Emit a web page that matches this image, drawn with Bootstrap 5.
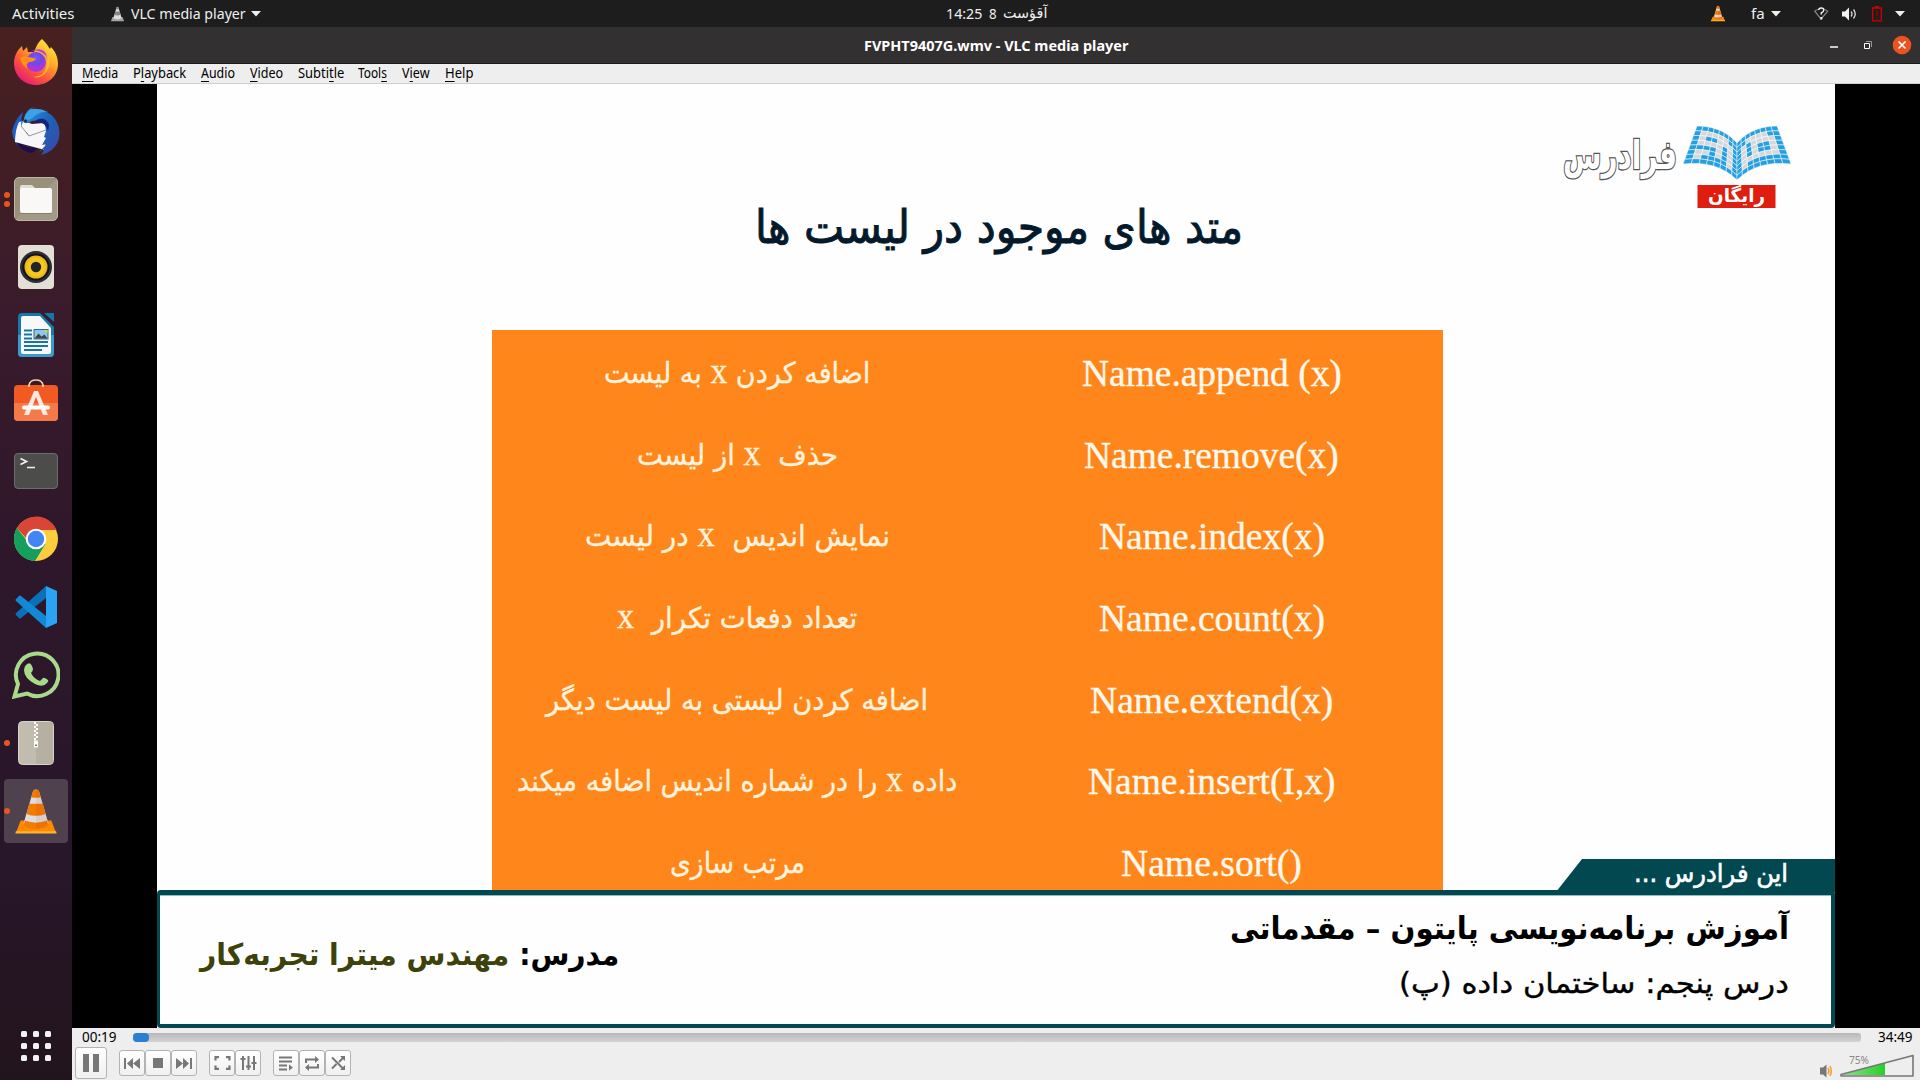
<!DOCTYPE html>
<html lang="fa">
<head>
<meta charset="utf-8">
<title>FVPHT9407G.wmv - VLC media player</title>
<link href="https://cdn.jsdelivr.net/npm/bootstrap@5.3.0/dist/css/bootstrap.min.css" rel="stylesheet">
<script src="https://cdn.jsdelivr.net/npm/bootstrap@5.3.0/dist/js/bootstrap.bundle.min.js"></script>
<style>
body{width:1920px;height:1080px;overflow:hidden;background:#000;font-family:"Noto Sans","DejaVu Sans",sans-serif;color:#000}
svg{display:block;flex:none}
.fit{display:inline-block;flex:none;white-space:nowrap}
.fit>span{display:inline-block;transform-origin:0 50%}
.topbar{height:27px;background:#1d1d1d;color:#f0f0f0;font-size:15px;line-height:25px}
.dock{width:72px;padding-top:2px;background:linear-gradient(#48201f,#391b2c 28%,#2e172b 50%,#28162a 80%,#22141c)}
.slot{height:68px;padding:0 4px;position:relative}
.slot.active::before{content:"";position:absolute;left:4px;top:2px;width:64px;height:64px;border-radius:4px;background:#50414f}
.slot svg{position:relative}
.dots{position:absolute;left:4px;top:0;width:6px;height:68px;gap:3px}
.dots i{width:6px;height:6px;border-radius:50%;background:#e95420}
.appgrid{display:grid;grid-template-columns:repeat(3,6px);gap:6px;margin:auto auto 19px}
.appgrid i{width:6px;height:6px;border-radius:1.5px;background:#f2f2f2}
.titlebar{height:37px;background:#333031;border-bottom:1px solid #1c1a1b;color:#fff;font-weight:700;font-size:15px;line-height:36px}
.menus{height:20px;background:#eee;border-bottom:1px solid #cfcfcf;padding-left:10px;gap:14.7px;font-size:13.5px;line-height:19px}
.menus u{text-underline-offset:3px;text-decoration-thickness:1px}
.stage{height:944px;background:#000;padding:0 85px}
.slide{height:944px;background:#fefefe;overflow:hidden}
.fa{font-family:"DejaVu Sans",sans-serif}
.heading{padding:107px 0 0 598px;height:246px;color:#041a2c;font-size:46px;line-height:72px;-webkit-text-stroke:1px #041a2c}
.methods{margin-left:335px;width:951px;height:561px;background:#ff861b;color:#fff3de;padding-top:3px}
.methods .line{height:81.7px}
.c-fa{width:490px;font-size:29px;line-height:80px;-webkit-text-stroke:.35px #fff3de}
.c-en{width:461px;font-family:"Liberation Serif",serif;font-size:37px;line-height:82px;color:#fff8ec;padding-right:2px;-webkit-text-stroke:.35px #fff8ec}
.lx{font-family:"Liberation Serif",serif;font-size:36px;line-height:1px}
.logo{position:absolute;right:0;top:26px}
.lesson{position:absolute;left:0;bottom:0;width:1678px;height:138px;border:solid #024850;border-width:5px 4px 4px 3px;border-radius:4px;background:#fefefe;box-shadow:inset 0 1px 0 #8dbcc2}
.lessontab{position:absolute;right:0;top:775px;width:279px;height:33px;background:#024850;clip-path:polygon(26px 0,100% 0,100% 100%,0 100%);color:#fff;font-size:25px;line-height:30px;padding-right:47px;-webkit-text-stroke:.6px #fff}
.teacher{font-size:30px;font-weight:700;padding-left:40px;padding-bottom:10px;line-height:40px}
.l1{font-size:31px;font-weight:700;line-height:56px}
.l2{font-size:28px;line-height:56px;-webkit-text-stroke:.4px #000}
.controls{height:52px;background:#eee}
.seekrow{height:18px;font-size:13.5px;line-height:18px;padding-left:10px}
.track{height:9px;width:1728px;border-radius:3px;background:linear-gradient(#b7b7b7,#d3d3d3)}
.knob{width:16px;height:9px;border-radius:4px;background:#2a7fd3}
.tool{padding:0;width:26px;height:26px;border:1px solid #b3b3b3;border-radius:3px;background:linear-gradient(#fff,#f0f0f0)}
.tool.big{width:32px;height:32px}
</style>
</head>
<body>
<svg width="0" height="0" style="display:none"><defs>
<symbol id="cone" viewBox="0 0 48 48"><path d="M8 33.500h32l5 13H3z" fill="#ff8a00"/><path d="M3 44.500h42l.5 2.500h-43z" fill="#ffb52e"/><path d="M21 2.500q3-3 6 0l10 34q-13 9-26 0z" fill="#dedede"/><path d="M21 2.500q3-3 6 0L29 9q-5 1.500-10 0zM17 16h14l3 10.500q-10 4-20 0zM12.500 33.500q11.500 4.500 23 0l1.500 5q-13 8-26 0z" fill="#f47a00"/><path d="M24 0q2 0 3 2.500l10 34q-5 4.500-13 5z" fill="#a33" opacity=".1"/></symbol>
<symbol id="conegray" viewBox="0 0 48 48"><path d="M8 33.500h32l5 14H3z" fill="#a5a5a5"/><path d="M21 2.500q3-3 6 0l10 34q-13 9-26 0z" fill="#ddd"/><path d="M21 2.500q3-3 6 0L29 9h-10zM17 16h14l3 10.500q-10 4-20 0z" fill="#858585"/></symbol>
</defs></svg>

<header class="topbar d-flex align-items-center">
  <span class="fit" style="margin-left:12px" data-w="63">Activities</span>
  <svg width="15" height="16" style="margin-left:35px"><use href="#conegray"/></svg>
  <span class="fit" style="margin-left:6px" data-w="115">VLC media player</span>
  <svg width="10" height="6" style="margin-left:5px"><path d="M0 0h10L5 5.500z" fill="#eee"/></svg>
  <span class="fit" style="margin-left:685px" data-w="36">14:25</span>
  <span class="fit" style="margin-left:7px" data-w="8">8</span>
  <span class="fit fa" style="margin-left:6px" data-w="44" dir="rtl">آقؤست</span>
  <svg width="16" height="17" style="margin-left:663px"><use href="#cone"/></svg>
  <span class="fit" style="margin-left:25px" data-w="14">fa</span>
  <svg width="10" height="6" style="margin-left:6px"><path d="M0 0h10L5 5.500z" fill="#eee"/></svg>
  <svg width="15" height="14" style="margin-left:33px" fill="none"><path d="M4 2.500Q2 3 .8 4.200L7 12l6.700-7.800Q12.500 3 10.500 2.500" stroke="#888" stroke-width="1.200"/><path d="M4.800 3q0-2 2.500-2t2.500 2q0 1.500-2.500 3v1.500" stroke="#f2f2f2" stroke-width="1.500"/><rect x="6.300" y="10" width="2" height="2.500" fill="#f2f2f2"/></svg>
  <svg width="15" height="14" style="margin-left:13px"><path d="M0 4.500h3L7 .5v13l-4-4H0z" fill="#f2f2f2"/><path d="M9 4.500q2 2.500 0 5M11.500 2.500q3.500 4.500 0 9" fill="none" stroke="#ddd" stroke-width="1.300"/></svg>
  <svg width="10" height="16" style="margin-left:15px"><path d="M3 0h4v2H3z" fill="#c00"/><path d="M.7 2h8.600v12.800H.7z" fill="none" stroke="#c00" stroke-width="1.300"/><path d="M5 4.500V10M5 11v1.800" stroke="#900" stroke-width="1.400"/></svg>
  <svg width="10" height="6" style="margin-left:13px"><path d="M0 0h10L5 5.500z" fill="#eee"/></svg>
</header>

<div class="d-flex">
<nav class="dock d-flex flex-column" style="height:1053px">
  <div class="slot d-flex align-items-center justify-content-center"><svg width="48" height="48" viewBox="0 0 48 48"><defs><linearGradient id="ff" x1=".9" y1="0" x2=".2" y2="1"><stop offset="0" stop-color="#fff24a"/><stop offset=".35" stop-color="#ffb22a"/><stop offset=".65" stop-color="#ff5a36"/><stop offset="1" stop-color="#e3127e"/></linearGradient><radialGradient id="fp" cx=".5" cy=".3"><stop offset="0" stop-color="#7a55ff"/><stop offset=".55" stop-color="#6b4be0"/><stop offset="1" stop-color="#a935e0"/></radialGradient></defs><path d="M30 0c5 5 6 7 8 10l1-2c5 5 7 11 7 17C46 37 36 46 24 46S2 37 2 24c0-6 3-13 8-17l1 5 4-4 1 5 6 0c2-4 3-9 8-13z" fill="url(#ff)"/><circle cx="24" cy="23" r="10" fill="url(#fp)"/><path d="M8 19q4-3 8-1 7 1 8 2-2 3-7 3-4 2-1 7-6-3-8-11z" fill="#ff9216"/><path d="M17 13q8-4 15 2 4 3 3 10 3-8-3-13-6-4-15 1z" fill="#c03bd8"/><path d="M33 12q8 10 2 20-5 8-14 6 14-1 14-15 0-6-2-11z" fill="#ffce36" opacity=".75"/></svg></div>
  <div class="slot d-flex align-items-center justify-content-center"><svg width="48" height="48" viewBox="0 0 48 48"><defs><linearGradient id="tb" x1="0" y1="0" x2="1" y2="1"><stop offset="0" stop-color="#2f9be8"/><stop offset=".5" stop-color="#1b63b8"/><stop offset="1" stop-color="#4144a8"/></linearGradient></defs><path d="M11 5Q3 12 0 24q1 14 12 19L6 36l-3-8 6-14z" fill="#1c5fc0"/><path d="M5 33q7 9 21 8l-6 5Q8 44 4 35z" fill="#1c0c50"/><path d="M7 15l5-1 8 3 12-1 3 6-2 21L3 35q0-12 4-20z" fill="#f7f7f9"/><path d="M9 19l8 10 17-6M17 29l-3-4" fill="none" stroke="#999" stroke-width="1"/><path d="M9 20l3-8q2-10 10-12l-3 2q16-1 24 10 6 9 4 19-3 13-18 17 3-4 3-6l-5 3 8-8-5 1 4-7-2-1 2-6-1-7q-6-4-13-3-7 5-11-1z" fill="url(#tb)"/><path d="M22 15q12-1 14 9 3-9-4-12-6-1-10 3z" fill="#18207e"/><path d="M20 2q-8 4-8 12 6 0 12-6 6-4 12-3-8-4-16-3z" fill="#3ba1e8"/><circle cx="13.500" cy="14" r="1.700" fill="#27323d"/></svg></div>
  <div class="slot d-flex align-items-center justify-content-center"><div class="dots d-flex flex-column justify-content-center"><i></i><i></i></div><svg width="48" height="48" viewBox="0 0 48 48"><rect x="2.500" y="2.500" width="43" height="43" rx="4.500" fill="#a29a87" stroke="#bdb7a8"/><path d="M45 3L3 45V8q0-5 5-5z" fill="#989079"/><path d="M8 20v-8q0-2 2-2h10l3 3v7z" fill="#e0ddd3"/><rect x="8" y="13" width="32" height="25" rx="2" fill="#f9f8f7"/><path d="M9 38.500h30" stroke="#857d6b"/></svg></div>
  <div class="slot d-flex align-items-center justify-content-center"><svg width="48" height="48" viewBox="0 0 48 48"><rect x="6" y="2" width="36" height="44" rx="4" fill="#e3dfd4"/><circle cx="24" cy="24" r="16" fill="#2c2d37"/><circle cx="24" cy="24" r="13.500" fill="#11131c"/><circle cx="24" cy="24" r="11.500" fill="#edb910"/><circle cx="24" cy="24" r="9.500" fill="#f4c723"/><circle cx="24" cy="24" r="5.200" fill="#24252b"/></svg></div>
  <div class="slot d-flex align-items-center justify-content-center"><svg width="48" height="48" viewBox="0 0 48 48"><path d="M10 2h18l14 14v26q0 4-4 4H10q-4 0-4-4V6q0-4 4-4z" fill="#1878ae"/><path d="M6 24h36v18q0 4-4 4H10q-4 0-4-4z" fill="#3a9bcd"/><path d="M11 5h17l11 12v24q0 2-2 2H11q-2 0-2-2V7q0-2 2-2z" fill="#f8f8f8"/><path d="M32 2h10v9z" fill="#1676aa"/><path d="M12 19.500h8M12 23.500h8M12 27.500h8M12 31h24M12 35h24M12 39h18" stroke="#1674aa" stroke-width="1.800"/><rect x="22" y="18.500" width="14" height="9.500" fill="#8cc7ea" stroke="#2a6e98"/><path d="M22.500 27.500l4-5 3 3 3-2 3 4z" fill="#444"/><path d="M32 19h3.500v3z" fill="#f4cd37"/></svg></div>
  <div class="slot d-flex align-items-center justify-content-center"><svg width="48" height="48" viewBox="0 0 48 48"><rect x="2" y="6" width="44" height="36" rx="4" fill="#f15a22"/><path d="M2 24h44v14q0 4-4 4H6q-4 0-4-4z" fill="#f47b49"/><path d="M17 8V6q1-5 7-5t7 5v2" fill="none" stroke="#f3d1a4" stroke-width="1.700"/><path d="M22 12h4l10 24h-5L24 18l-7 18h-5z" fill="#fbe8df"/><path d="M12 28.500h24" stroke="#fff" stroke-width="4" stroke-linecap="round"/></svg></div>
  <div class="slot d-flex align-items-center justify-content-center"><svg width="48" height="48" viewBox="0 0 48 48"><rect x="2.500" y="6.500" width="43" height="35" rx="3.500" fill="#4c4d4b" stroke="#6d6e6b"/><path d="M8.500 11.500l6 3-6 3M15 20.500h8" fill="none" stroke="#f1f1f1" stroke-width="1.700"/></svg></div>
  <div class="slot d-flex align-items-center justify-content-center"><svg width="48" height="48" viewBox="0 0 48 48"><circle cx="24" cy="24" r="22" fill="#fecd3e"/><path d="M4.900 13A22 22 0 0023 46l10.500-17L24 24l-8 3z" fill="#14a05c"/><path d="M4.900 13A22 22 0 0144.500 15H24l-9 9z" fill="#d94638"/><circle cx="24" cy="24" r="10.300" fill="#fff"/><circle cx="24" cy="24" r="8.200" fill="#4285f4"/></svg></div>
  <div class="slot d-flex align-items-center justify-content-center"><svg width="48" height="48" viewBox="0 0 48 48"><path d="M34 3l11 5v32l-11 5z" fill="#2aa4f2"/><path d="M34 3v12L9 35q-1 1-2 0l-3-3q-1-1 0-2z" fill="#0a70b8"/><path d="M34 45V33L9 13q-1-1-2 0l-3 3q-1 1 0 2z" fill="#1388d4"/></svg></div>
  <div class="slot d-flex align-items-center justify-content-center"><svg width="48" height="48" viewBox="0 0 48 48"><path d="M2.500 45.500l3.500-12.500A21.300 21.300 0 1115 42.500z" fill="none" stroke="#a9da8a" stroke-width="4"/><path d="M14 14q4-4 6 1l1 3q0 2-2 4 3 6 9 8l3-3q1-1 5 2 1 1-1 3-4 5-12 1Q12 27 12 19q0-3 2-5z" fill="#a9da8a"/></svg></div>
  <div class="slot d-flex align-items-center justify-content-center"><div class="dots d-flex flex-column justify-content-center"><i></i></div><svg width="48" height="48" viewBox="0 0 48 48"><rect x="6.500" y="2.500" width="35" height="43" rx="4" fill="#c1bcae" stroke="#d8d4c9"/><path d="M24 3h14q3 0 3 3v36q0 3-3 3H24z" fill="#b5b0a2"/><path d="M22 3h2v2h2v2h-2v2h2v2h-2v2h2v2h-2v2h2v2h-2v2h-2v-2h2v-2h-2v-2h2v-2h-2v-2h2V9h-2V7h2V5h-2z" fill="#fff"/><path d="M22 21.500h4v7h-4z" fill="#fff"/><path d="M23 25.500h2v1.500h-2z" fill="#777"/></svg></div>
  <div class="slot active d-flex align-items-center justify-content-center"><div class="dots d-flex flex-column justify-content-center"><i></i></div><svg width="46" height="47"><use href="#cone"/></svg></div>
  <div class="appgrid"><i></i><i></i><i></i><i></i><i></i><i></i><i></i><i></i><i></i></div>
</nav>

<main style="width:1848px">
  <div class="titlebar d-flex align-items-center">
    <span class="fit" style="margin-left:792px" data-w="264">FVPHT9407G.wmv - VLC media player</span>
    <svg width="8" height="6" style="margin-left:702px"><path d="M0 5h8" stroke="#fff" stroke-width="1.500"/></svg>
    <svg width="8" height="8" style="margin-left:26px" fill="none"><path d="M.5 2.500h5v5h-5z" stroke="#fff"/><path d="M2 .5h5.500V6" stroke="#999"/></svg>
    <svg width="20" height="20" style="margin-left:20px"><circle cx="10" cy="10" r="9.300" fill="#e95420"/><path d="M6.500 6.500l7 7M13.500 6.500l-7 7" stroke="#fff" stroke-width="1.700"/></svg>
  </div>
  <div class="menus d-flex">
    <span class="fit" data-w="36"><u>M</u>edia</span><span class="fit" data-w="53.500">P<u>l</u>ayback</span><span class="fit" data-w="34"><u>A</u>udio</span><span class="fit" data-w="33.500"><u>V</u>ideo</span><span class="fit" data-w="46">Subti<u>t</u>le</span><span class="fit" data-w="29">Tool<u>s</u></span><span class="fit" data-w="28">V<u>i</u>ew</span><span class="fit" data-w="28"><u>H</u>elp</span>
  </div>

  <section class="stage">
    <div class="slide position-relative">
      <div class="heading fa"><span class="fit" dir="rtl" data-w="488">متد های موجود در لیست ها</span></div>
      <svg class="logo" width="290" height="116" viewBox="1545 110 290 116">
        <g id="pages" stroke="#fff" stroke-width=".5"></g>
        <text x="1563" y="169" textLength="114" lengthAdjust="spacingAndGlyphs" font-family="DejaVu Sans" font-weight="700" font-size="40" fill="#fff" stroke="#555" stroke-width="2.600" paint-order="stroke">فرادرس</text>
        <rect x="1697.500" y="185" width="78" height="23" fill="#e01e10"/>
        <text x="1708" y="202" textLength="57" lengthAdjust="spacingAndGlyphs" font-family="DejaVu Sans" font-weight="700" font-size="19" fill="#fff">رایگان</text>
      </svg>
      <div class="methods">
        <div class="line d-flex"><div class="c-fa fa text-center"><span class="fit" dir="rtl" data-w="266">اضافه کردن <span class="lx">x</span> به لیست</span></div><div class="c-en text-center"><span class="fit" data-w="260">Name.append (x)</span></div></div>
        <div class="line d-flex"><div class="c-fa fa text-center"><span class="fit" dir="rtl" data-w="201">حذف &nbsp;<span class="lx">x</span> از لیست</span></div><div class="c-en text-center"><span class="fit" data-w="255">Name.remove(x)</span></div></div>
        <div class="line d-flex"><div class="c-fa fa text-center"><span class="fit" dir="rtl" data-w="305">نمایش اندیس &nbsp;<span class="lx">x</span> در لیست</span></div><div class="c-en text-center"><span class="fit" data-w="226">Name.index(x)</span></div></div>
        <div class="line d-flex"><div class="c-fa fa text-center"><span class="fit" dir="rtl" data-w="240">تعداد دفعات تکرار &nbsp;<span class="lx">x</span></span></div><div class="c-en text-center"><span class="fit" data-w="226">Name.count(x)</span></div></div>
        <div class="line d-flex"><div class="c-fa fa text-center"><span class="fit" dir="rtl" data-w="382">اضافه کردن لیستی به لیست دیگر</span></div><div class="c-en text-center"><span class="fit" data-w="243">Name.extend(x)</span></div></div>
        <div class="line d-flex"><div class="c-fa fa text-center"><span class="fit" dir="rtl" data-w="440">داده <span class="lx">x</span> را در شماره اندیس اضافه میکند</span></div><div class="c-en text-center"><span class="fit" data-w="248">Name.insert(I,x)</span></div></div>
        <div class="line d-flex"><div class="c-fa fa text-center"><span class="fit" dir="rtl" data-w="135">مرتب سازی</span></div><div class="c-en text-center"><span class="fit" data-w="181">Name.sort()</span></div></div>
      </div>
      <div class="lessontab fa text-end"><span class="fit" dir="rtl" data-w="154">این فرادرس ...</span></div>
      <div class="lesson fa d-flex justify-content-between">
        <div class="teacher align-self-center"><span class="fit" dir="rtl" data-w="419">مدرس: <span style="color:#3c420a">مهندس میترا تجربه‌کار</span></span></div>
        <div class="d-flex flex-column align-items-end" style="padding-right:42px;padding-top:5px">
          <div class="l1"><span class="fit" dir="rtl" data-w="559">آموزش برنامه‌نویسی پایتون – مقدماتی</span></div>
          <div class="l2"><span class="fit" dir="rtl" data-w="390">درس پنجم: ساختمان داده (پ)</span></div>
        </div>
      </div>
    </div>
  </section>

  <footer class="controls">
    <div class="seekrow d-flex align-items-center">
      <span class="fit" data-w="35">00:19</span>
      <div class="track" style="margin-left:16px"><div class="knob"></div></div>
      <span class="fit" style="margin-left:17px" data-w="35">34:49</span>
    </div>
    <div class="d-flex" style="padding-left:3px">
      <div class="d-flex align-items-center" style="height:34px">
        <button class="btn tool big d-flex align-items-center justify-content-center"><svg width="16" height="18"><path d="M0 0h6v18H0zM10 0h6v18h-6z" fill="#777"/></svg></button>
        <button class="btn tool d-flex align-items-center justify-content-center" style="margin-left:12px"><svg width="16" height="11" fill="#777"><path d="M0 0h2v11H0zM9 0v11L3 5.500zM16 0v11l-7-5.500z"/></svg></button>
        <button class="btn tool d-flex align-items-center justify-content-center"><svg width="10" height="10"><path d="M0 0h10v10H0z" fill="#777"/></svg></button>
        <button class="btn tool d-flex align-items-center justify-content-center"><svg width="16" height="11" fill="#777"><path d="M14 0h2v11h-2zM0 0v11l7-5.500zM7 0v11l6-5.500z"/></svg></button>
        <button class="btn tool d-flex align-items-center justify-content-center" style="margin-left:12px"><svg width="17" height="14" fill="none" stroke="#777" stroke-width="2.200"><path d="M1.500 4.500V1.200H5M12 1.200h3.500v3.300M15.500 9.500v3.300H12M5 12.800H1.500V9.500"/></svg></button>
        <button class="btn tool d-flex align-items-center justify-content-center"><svg width="17" height="14" fill="none" stroke="#777" stroke-width="2"><path d="M3 0v14M8.500 0v14M14 0v14M.5 3h5M6 10.500h5M11.500 7h5"/></svg></button>
        <button class="btn tool d-flex align-items-center justify-content-center" style="margin-left:12px"><svg width="15" height="15" fill="none" stroke="#777" stroke-width="2"><path d="M0 1.500h13M0 5.500h13M0 9.500h8M0 13.500h8"/><path d="M10 8.500v6l4-3z" fill="#777" stroke="none"/></svg></button>
        <button class="btn tool d-flex align-items-center justify-content-center"><svg width="16" height="15" fill="none" stroke="#777" stroke-width="2"><path d="M2 7V3.500h10M14 8v3.500H4"/><path d="M11 0v7l4-3.500zM5 8v7l-4-3.500z" fill="#777" stroke="none"/></svg></button>
        <button class="btn tool d-flex align-items-center justify-content-center"><svg width="15" height="14" fill="none" stroke="#777" stroke-width="2"><path d="M1 1.500l11 11M1 12.500L5.500 8M8 6l4-4"/><path d="M9 0h5v5zM14 9v5H9z" fill="#777" stroke="none"/></svg></button>
      </div>
      <svg width="100" height="34" viewBox="1817 1046 100 34" style="margin-left:auto;margin-right:3px">
        <defs><linearGradient id="vg"><stop offset="0" stop-color="#8fe08c"/><stop offset="1" stop-color="#28d128"/></linearGradient></defs>
        <path d="M1820 1067.500h3l3.500-3v13l-3.500-3h-3z" fill="#777"/><path d="M1828 1068q2 3 0 6M1830 1066q2.500 5 0 10" fill="none" stroke="#f59a30" stroke-width="1.500"/>
        <path d="M1841 1075l44-12v12z" fill="url(#vg)"/>
        <path d="M1841 1074.500l72-19v20.500h-72z" fill="none" stroke="#777" stroke-width="1.600" stroke-linejoin="round"/>
        <text x="1849" y="1064" textLength="20" lengthAdjust="spacingAndGlyphs" font-family="Noto Sans" font-size="10" fill="#888">75%</text>
      </svg>
    </div>
  </footer>
</main>
</div>

<script>
/* Squeeze each label to its measured column width. */
document.querySelectorAll('.fit').forEach(function(el){
  var inner=document.createElement('span');
  inner.dir=el.dir||'ltr';
  while(el.firstChild) inner.appendChild(el.firstChild);
  el.removeAttribute('dir'); el.style.direction='ltr'; el.style.textAlign='left';
  el.appendChild(inner);
  var w=+el.dataset.w;
  inner.style.transform='scaleX('+(w/inner.offsetWidth)+')';
  el.style.width=w+'px';
});
/* Open book built from curved rows of tiles, 1 = blue, 0 = grey. */
var maps=[["11111111","10000011","10110001","10000101","11110101","10010101","10111101","11111111"],
          ["11111111","11000011","10000101","10110101","10110101","10000001","11111101","11111111"]];
function q(a,b,c,t){return [0,1].map(function(i){return (1-t)*(1-t)*a[i]+2*t*(1-t)*b[i]+t*t*c[i];});}
function pt(u,v,right){
  var a=q([1697,126],[1722,126],[1737,143],u), b=q([1683,164],[1717,160],[1737,180],u);
  var x=a[0]+(b[0]-a[0])*v, y=a[1]+(b[1]-a[1])*v;
  return (right?3474-x:x).toFixed(1)+','+y.toFixed(1);
}
var out='';
[0,1].forEach(function(s){for(var r=0;r<8;r++)for(var c=0;c<8;c++){
  var u=c/8,v=r/8,d=1/8;
  out+='<polygon points="'+[pt(u,v,s),pt(u+d,v,s),pt(u+d,v+d,s),pt(u,v+d,s)].join(' ')+'" fill="'+(maps[s][r][c]==='1'?'#259fdf':'#d5d7da')+'"/>';
}});
document.getElementById('pages').innerHTML=out;
</script>
</body>
</html>
